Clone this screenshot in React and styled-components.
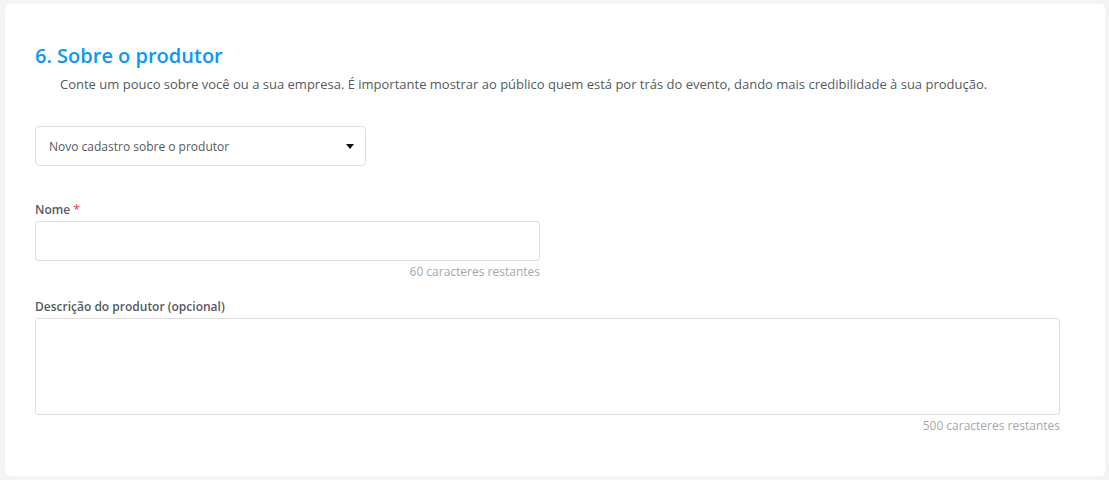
import React from "react";
import styled, { createGlobalStyle } from "styled-components";

const Global = createGlobalStyle`
  html, body { margin: 0; padding: 0; background: #f4f4f4; }
  body { font-family: "Open Sans", "Noto Sans", sans-serif; }
  * { box-sizing: border-box; }
`;

const Page = styled.div`
  padding: 4px 4px 4px 5px;
`;

const Card = styled.section`
  background: #fff;
  border-radius: 5px;
  padding: 38px 45px 42px 30px;
  min-height: 472px;
`;

const Title = styled.h2`
  margin: 0;
  font-size: 20px;
  line-height: 27px;
  font-weight: 600;
  color: #0a98f5;
`;

const Subtitle = styled.p`
  margin: 6px 0 0 25px;
  font-size: 13px;
  line-height: 18px;
  color: #555a60;
`;

const Form = styled.div`
  margin-top: 33px;
  display: flex;
  flex-direction: column;
`;

const SelectBox = styled.div`
  width: 331px;
  height: 40px;
  border: 1px solid #dedede;
  border-radius: 4px;
  display: flex;
  align-items: center;
  justify-content: space-between;
  padding: 0 11px 0 13px;
  font-size: 12px;
  color: #555a60;
`;

const Caret = styled.span`
  width: 0;
  height: 0;
  border-left: 4px solid transparent;
  border-right: 4px solid transparent;
  border-top: 5px solid #111;
`;

const Field = styled.div`
  display: flex;
  flex-direction: column;
  width: ${(p) => p.$width};
  margin-top: ${(p) => p.$top};
`;

const Label = styled.label`
  font-size: 12px;
  font-weight: 600;
  line-height: 16px;
  color: #555a60;
  margin-bottom: 3px;
`;

const Required = styled.span`
  color: #f0545b;
`;

const Input = styled.div`
  height: ${(p) => p.$height};
  border: 1px solid #dedede;
  border-radius: 3px;
  background: #fff;
`;

const Counter = styled.div`
  text-align: right;
  font-size: 12px;
  line-height: 16px;
  margin-top: 3px;
  color: #a5a7aa;
`;

export default function App() {
  return (
    <Page>
      <Global />
      <Card>
        <Title>6. Sobre o produtor</Title>
        <Subtitle>
          Conte um pouco sobre você ou a sua empresa. É importante mostrar ao público quem está por trás do evento, dando mais credibilidade à sua produção.
        </Subtitle>
        <Form>
          <SelectBox>
            <span>Novo cadastro sobre o produtor</span>
            <Caret />
          </SelectBox>
          <Field $width="505px" $top="36px">
            <Label>
              Nome <Required>*</Required>
            </Label>
            <Input $height="40px" />
            <Counter>60 caracteres restantes</Counter>
          </Field>
          <Field $width="1025px" $top="19px">
            <Label>Descrição do produtor (opcional)</Label>
            <Input $height="97px" />
            <Counter>500 caracteres restantes</Counter>
          </Field>
        </Form>
      </Card>
    </Page>
  );
}
